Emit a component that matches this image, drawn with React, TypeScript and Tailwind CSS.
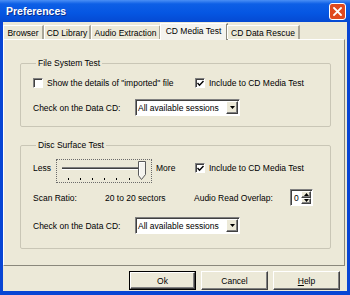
import React from 'react';

const FONT = "font-['Liberation_Sans',Arial,sans-serif]";

function CloseButton() {
    return (
        <div className="w-[17px] h-[17px] rounded-[3px] border border-white bg-[#e04a1f] flex items-center justify-center">
            <svg width="9" height="9" viewBox="0 0 9 9">
                <path d="M1 1 L8 8 M8 1 L1 8" stroke="#fff" strokeWidth="1.8" strokeLinecap="square" />
            </svg>
        </div>
    );
}

function TitleBar() {
    return (
        <div className="h-[22px] flex items-center justify-between pl-[6px] pr-[4px] bg-[linear-gradient(180deg,#4a8ff5_0%,#0d5fe6_18%,#0556e2_60%,#0549d2_100%)]">
            <span className="text-white font-bold text-[10.5px] leading-none [text-shadow:1px_1px_0_#0b2f8c]">
                Preferences
            </span>
            <CloseButton />
        </div>
    );
}

const tabs = [
    { label: 'Browser', w: 'w-[41px]' },
    { label: 'CD Library', w: 'w-[47px]' },
    { label: 'Audio Extraction', w: 'w-[70px]' },
    { label: 'CD Media Test', w: 'w-[68px]', active: true },
    { label: 'CD Data Rescue', w: 'w-[73px]' },
];

function Tabs() {
    return (
        <div className="h-[17px] flex items-end relative z-10">
            {tabs.map((t) =>
                t.active ? (
                    <div
                        key={t.label}
                        className={`${t.w} h-[17px] -mb-px -mx-[1px] bg-[#f4f3ee] border-l border-t border-white border-r-2 border-r-[#8a887c] flex items-start justify-center pt-[2px] leading-[10px]`}
                    >
                        {t.label}
                    </div>
                ) : (
                    <div
                        key={t.label}
                        className={`${t.w} h-[14px] border-l border-t border-white border-r-2 border-r-[#a9a698] flex items-center justify-center leading-[10px]`}
                    >
                        {t.label}
                    </div>
                )
            )}
        </div>
    );
}

function Checkbox({ checked }: { checked?: boolean }) {
    return (
        <div className="w-[10px] h-[10px] shrink-0 bg-white border border-t-[#808080] border-l-[#808080] border-b-white border-r-white shadow-[inset_1px_1px_0_#404040] flex items-center justify-center">
            {checked && (
                <svg width="7" height="7" viewBox="0 0 7 7">
                    <path d="M0.5 3 L2.5 5.2 L6.5 1" fill="none" stroke="#000" strokeWidth="1.4" />
                </svg>
            )}
        </div>
    );
}

function ArrowBox({ children, className = '' }: { children: React.ReactNode; className?: string }) {
    return (
        <div
            className={`bg-[#ece9d8] border border-t-white border-l-white border-b-[#404040] border-r-[#404040] shadow-[inset_-1px_-1px_0_#808080] flex items-center justify-center ${className}`}
        >
            {children}
        </div>
    );
}

function Select({ value }: { value: string }) {
    return (
        <div className="w-[105px] h-[17px] bg-white border border-t-[#808080] border-l-[#808080] border-b-white border-r-white shadow-[inset_1px_1px_0_#404040] flex items-stretch pl-[2px]">
            <div className="flex-1 flex items-center leading-[10px]">{value}</div>
            <ArrowBox className="w-[12px] my-[1px] mr-[1px]">
                <svg width="5" height="3" viewBox="0 0 5 3">
                    <path d="M0 0 H5 L2.5 3 Z" fill="#000" />
                </svg>
            </ArrowBox>
        </div>
    );
}

function Spinner({ value }: { value: string }) {
    return (
        <div className="w-[23px] h-[17px] bg-white border border-t-[#808080] border-l-[#808080] border-b-white border-r-white shadow-[inset_1px_1px_0_#404040] flex items-stretch pl-[3px]">
            <div className="flex-1 flex items-center leading-[10px]">{value}</div>
            <div className="w-[10px] my-[1px] mr-[1px] flex flex-col">
                <ArrowBox className="flex-1">
                    <svg width="5" height="3" viewBox="0 0 5 3">
                        <path d="M0 3 H5 L2.5 0 Z" fill="#000" />
                    </svg>
                </ArrowBox>
                <ArrowBox className="flex-1">
                    <svg width="5" height="3" viewBox="0 0 5 3">
                        <path d="M0 0 H5 L2.5 3 Z" fill="#000" />
                    </svg>
                </ArrowBox>
            </div>
        </div>
    );
}

function Slider() {
    const ticks = [11, 23, 35, 47, 59, 72];
    return (
        <div className="w-[96px] h-[24px] border border-dotted border-[#6b6b6b]">
            <svg width="94" height="22" viewBox="0 0 94 22">
                {/* track */}
                <line x1="5" y1="7.5" x2="84" y2="7.5" stroke="#808080" />
                <line x1="5" y1="8.5" x2="84" y2="8.5" stroke="#404040" />
                <line x1="5" y1="9.5" x2="84" y2="9.5" stroke="#ffffff" />
                {ticks.map((x) => (
                    <line key={x} x1={x + 0.5} y1="18" x2={x + 0.5} y2="20" stroke="#000" />
                ))}
                {/* thumb */}
                <path d="M81.5 1.5 H88.5 V14.5 L84.5 19.5 L81.5 15.5 Z" fill="#f4f3ee" stroke="#5a5a5a" />
                <path d="M82.5 15 V2.5 H87.5" fill="none" stroke="#ffffff" />
            </svg>
        </div>
    );
}

function GroupBox({ title, children, className = '' }: { title: string; children: React.ReactNode; className?: string }) {
    return (
        <fieldset className={`w-[311px] border border-[#c9c6b6] rounded-[2px] pl-[12px] ${className}`}>
            <legend className="ml-[3px] px-[2px] leading-[10px]">{title}</legend>
            {children}
        </fieldset>
    );
}

function TabPage() {
    return (
        <div className="h-[227px] w-[342px] border-t border-l border-white border-r border-b border-r-[#8a887c] border-b-[#8a887c] pl-[16px] pt-[18px] flex flex-col">
            <GroupBox title="File System Test" className="pb-[10px]">
                <div className="flex mt-[10px] h-[10px] items-center">
                    <div className="w-[162px] flex items-center gap-[4px]">
                        <Checkbox />
                        <span className="leading-[10px]">Show the details of "imported" file</span>
                    </div>
                    <div className="flex items-center gap-[4px]">
                        <Checkbox checked />
                        <span className="leading-[10px]">Include to CD Media Test</span>
                    </div>
                </div>
                <div className="flex items-center mt-[11px]">
                    <span className="w-[102px] leading-[10px]">Check on the Data CD:</span>
                    <Select value="All available sessions" />
                </div>
            </GroupBox>

            <GroupBox title="Disc Surface Test" className="mt-[13px] pb-[14px]">
                <div className="flex items-start mt-[9px]">
                    <div className="w-[162px] flex items-start">
                        <span className="w-[23px] mt-[4px] leading-[10px]">Less</span>
                        <Slider />
                        <span className="ml-[4px] mt-[4px] leading-[10px]">More</span>
                    </div>
                    <div className="flex items-center gap-[4px] mt-[4px]">
                        <Checkbox checked />
                        <span className="leading-[10px]">Include to CD Media Test</span>
                    </div>
                </div>
                <div className="flex items-center mt-[6px]">
                    <div className="w-[161px] flex items-center">
                        <span className="w-[72px] leading-[10px]">Scan Ratio:</span>
                        <span className="leading-[10px]">20 to 20 sectors</span>
                    </div>
                    <span className="w-[96px] leading-[10px]">Audio Read Overlap:</span>
                    <Spinner value="0" />
                </div>
                <div className="flex items-center mt-[11px]">
                    <span className="w-[102px] leading-[10px]">Check on the Data CD:</span>
                    <Select value="All available sessions" />
                </div>
            </GroupBox>
        </div>
    );
}

function Button({ children, primary }: { children: React.ReactNode; primary?: boolean }) {
    return (
        <div className={`w-[67px] h-[19px] ${primary ? 'border border-black' : ''}`}>
            <div className="w-full h-full bg-[#ece9d8] border border-t-white border-l-white border-b-[#404040] border-r-[#404040] shadow-[inset_-1px_-1px_0_#808080] flex items-center justify-center leading-[10px]">
                {children}
            </div>
        </div>
    );
}

export default function App() {
    return (
        <div className={`w-[350px] h-[295px] bg-[#0845d4] flex flex-col overflow-hidden text-[8.5px] text-black ${FONT}`}>
            <TitleBar />
            <div className="flex-1 mx-[3px] mb-[4px] bg-[#ece9d8] flex flex-col">
                <Tabs />
                <TabPage />
                <div className="flex justify-end gap-[5px] pr-[7px] pt-[5px]">
                    <Button primary>Ok</Button>
                    <Button>Cancel</Button>
                    <Button>
                        <span>
                            <span className="underline">H</span>elp
                        </span>
                    </Button>
                </div>
            </div>
        </div>
    );
}
